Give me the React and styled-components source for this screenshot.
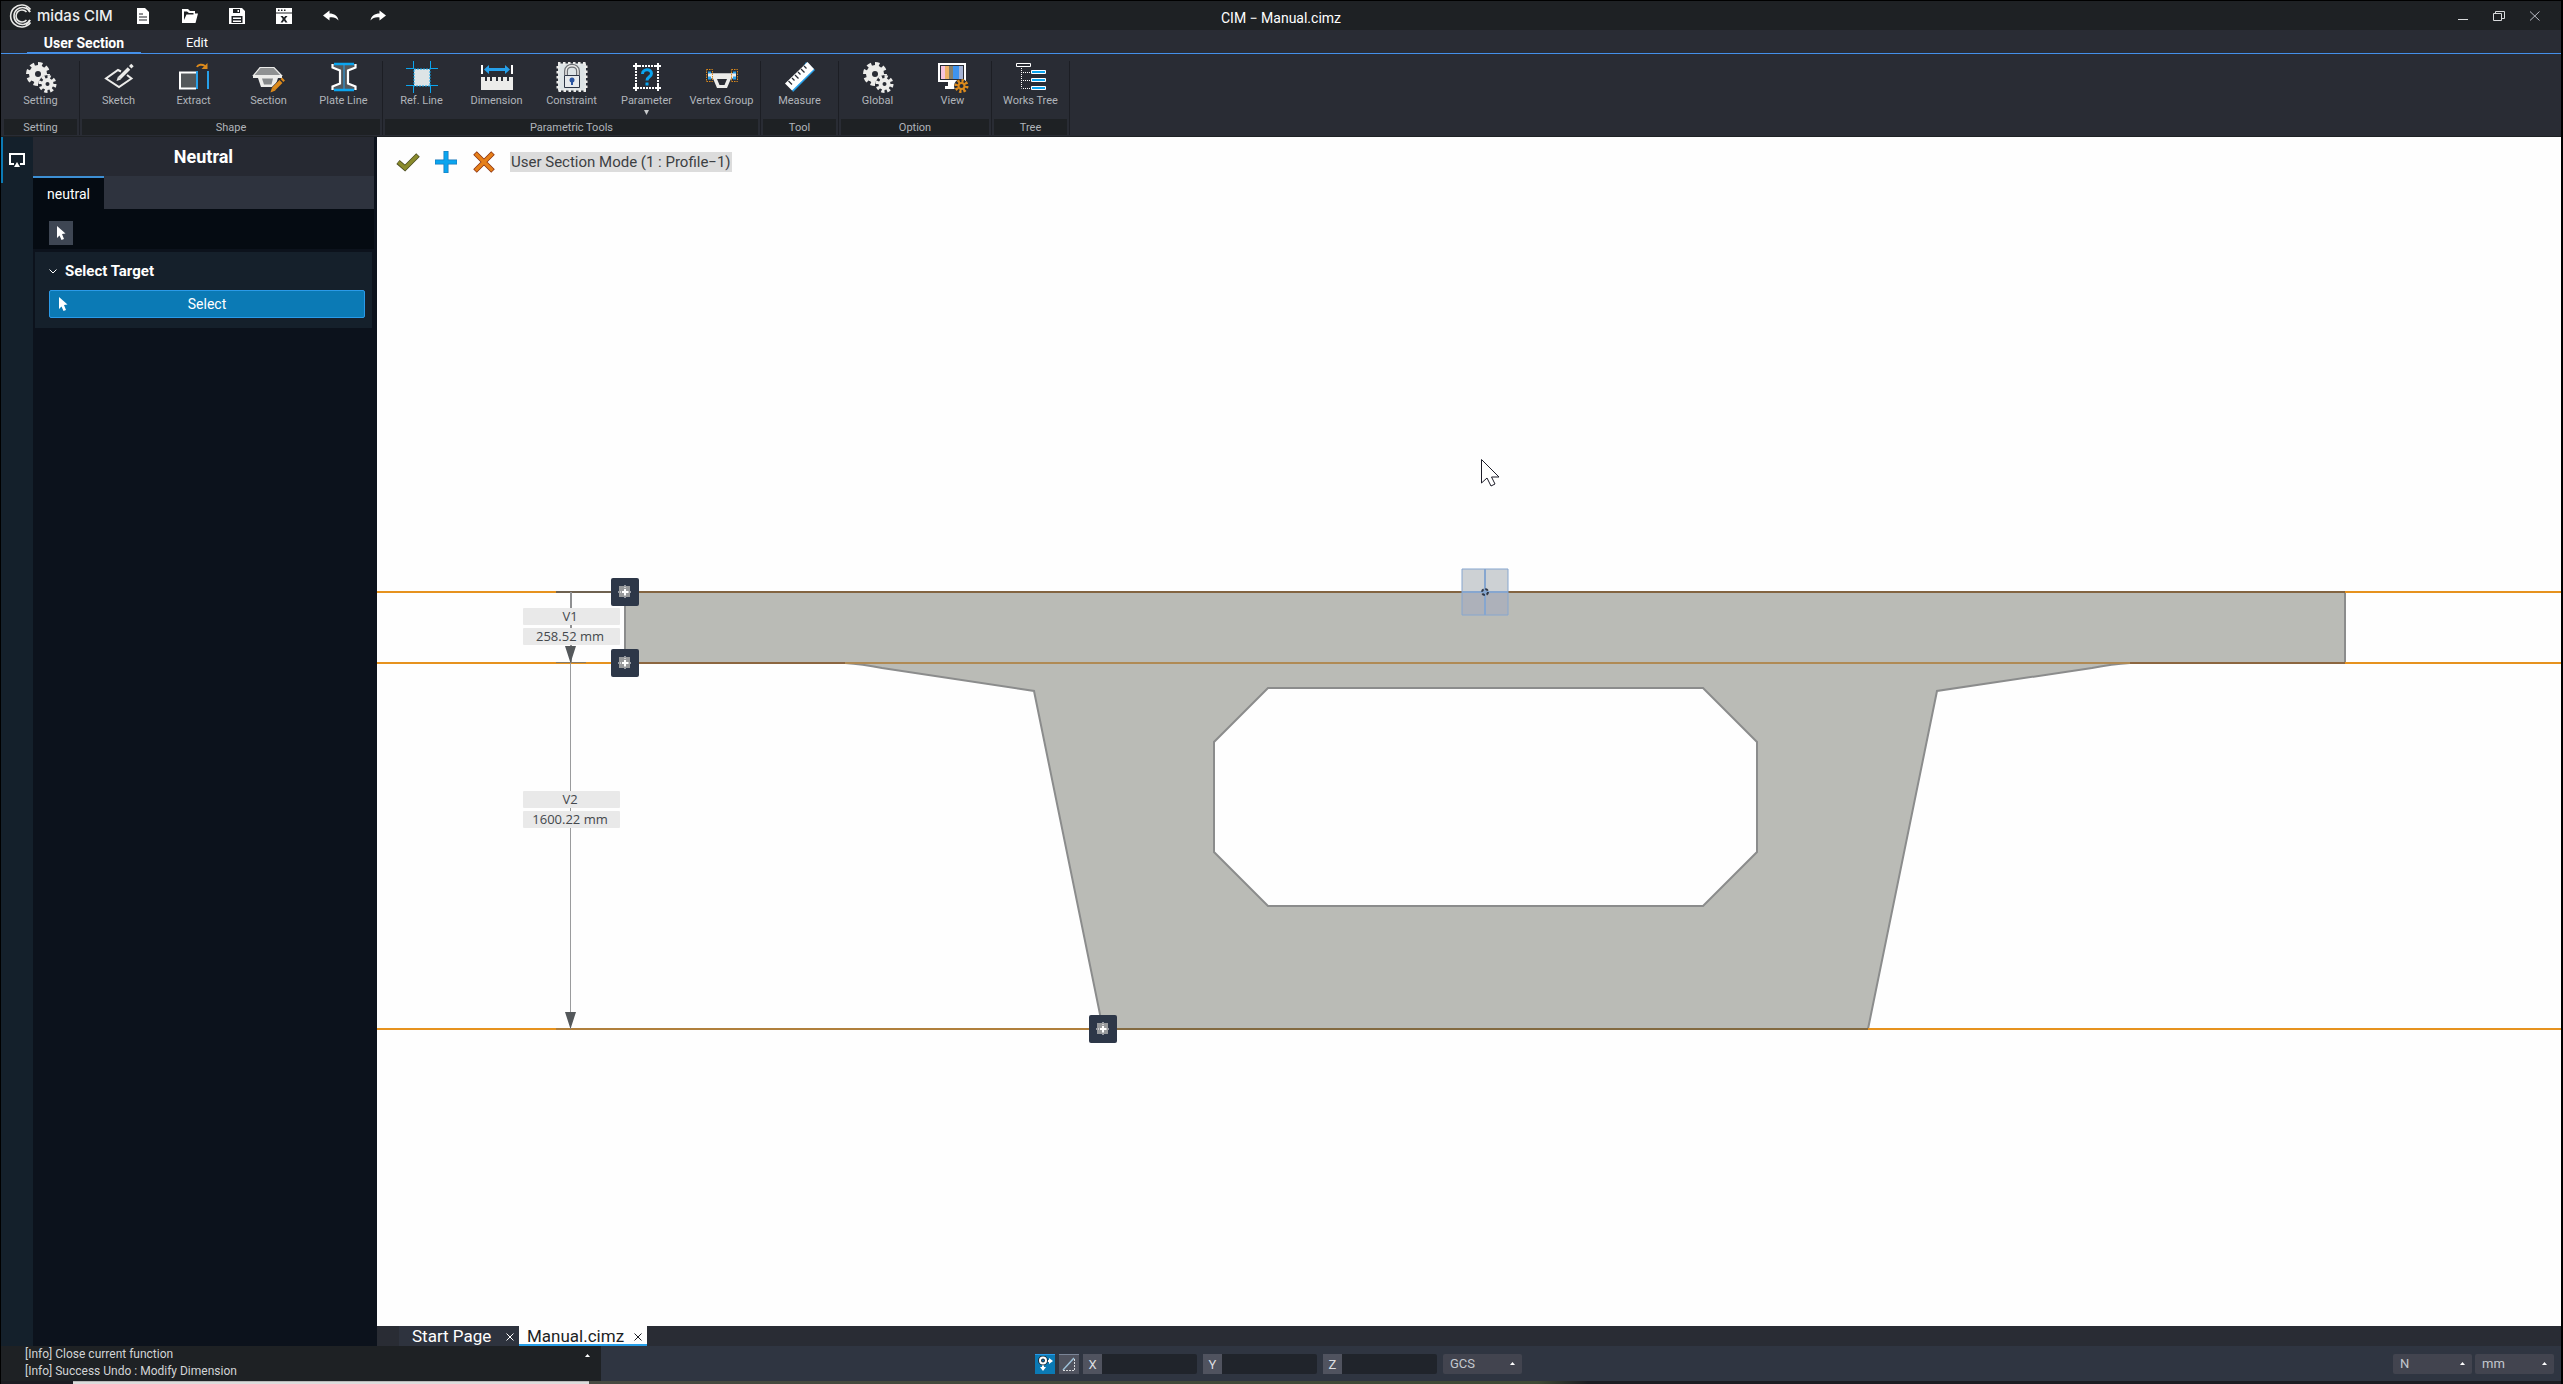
import React from 'react';
import styled, { createGlobalStyle } from 'styled-components';

const GlobalStyle = createGlobalStyle`
    * {
        box-sizing: border-box;
    }
    html, body, #root {
        height: 100%;
    }
    body {
        margin: 0;
        overflow: hidden;
        background: #000;
        color: #fff;
        font-family: Roboto, 'Noto Sans CJK KR', sans-serif;
    }
    button, input, select {
        font: inherit;
        color: inherit;
        border: none;
        margin: 0;
        padding: 0;
        outline: none;
    }
    svg {
        display: block;
        flex: none;
    }
`

/* ---------- icons ---------- */

const Gear = ({ cx, cy, r, color, hole }) => (
    <g>
        <circle cx={cx} cy={cy} r={r - 3} fill={color} />
        <circle cx={cx} cy={cy} r={r - 2} fill="none" stroke={color} strokeWidth="4" pathLength="16" strokeDasharray="1.1 0.9" />
        <circle cx={cx} cy={cy} r={hole} fill="#292c34" />
    </g>
)

const GearsIcon = () => (
    <svg width="32" height="32" viewBox="0 0 32 32">
        <Gear cx={13} cy={13} r={12} hole={3} color="#ececea" />
        <circle cx="22.500" cy="23" r="9" fill="#292c34" />
        <Gear cx={22.5} cy={23} r={9} hole={2} color="#ececea" />
    </svg>
)

const SketchIcon = () => (
    <svg width="32" height="32" viewBox="0 0 32 32" fill="none" stroke="#ececea">
        <path d="M18 10.500L15 9L3 17.500L16 26L28.500 17.500L24 14" strokeWidth="2" />
        <path d="M16.500 17L26 7.500" strokeWidth="3.500" />
        <path d="M27.200 6.200L29.500 4" strokeWidth="3.500" />
        <path d="M13.500 20L15 15.500L18 18.500Z" fill="#ececea" stroke="none" />
    </svg>
)

const ExtractIcon = () => (
    <svg width="32" height="32" viewBox="0 0 32 32" fill="none">
        <path d="M18 11.500H2V27.500H18" fill="#54585b" stroke="#fff" strokeWidth="2" />
        <path d="M19 10V28M30 10V28" stroke="#26a0ea" strokeWidth="2" />
        <path d="M19 6C20 3.500 24 3 27 5" stroke="#dc8a1c" strokeWidth="2" />
        <path d="M29.500 2V8H23.500Z" fill="#dc8a1c" />
    </svg>
)

const SectionIcon = () => (
    <svg width="34" height="32" viewBox="0 0 34 32">
        <path d="M8 6.500H22L29.500 14.500H1.500Z" fill="#8f9192" stroke="#ececea" strokeWidth="1.200" />
        <path d="M1 14.500H30V17H26L23 26H9L6 17H1Z" fill="#ececea" />
        <path d="M10 17.500H21L19.500 23.500H12Z" fill="#85888a" />
        <path d="M22 28L31 19" stroke="#292c34" strokeWidth="6" />
        <path d="M21.500 28L29 20.500" stroke="#dc8a1c" strokeWidth="4" />
        <path d="M30 19.500L31.500 18" stroke="#dc8a1c" strokeWidth="4" />
        <path d="M18.500 31.500L20 26.500L23.500 29.500Z" fill="#dc8a1c" />
    </svg>
)

const PlateIcon = () => (
    <svg width="32" height="32" viewBox="0 0 32 32">
        <path d="M5 3H27V6L19 9V23L27 26V29H5V26L13 23V9L5 6Z" fill="#54585b" />
        <path d="M4.500 3V6.500L12 9.500V22.500L4.500 25.500V29M27.500 3V6.500L20 9.500V22.500L27.500 25.500V29" fill="none" stroke="#fff" strokeWidth="2.200" />
        <path d="M6 3H26M6 29H26" stroke="#0aa5ef" strokeWidth="2.400" />
        <path d="M16 3V29" stroke="#26a0ea" />
    </svg>
)

const RefLineIcon = () => (
    <svg width="32" height="32" viewBox="0 0 32 32">
        <path d="M8 8H24V25H8Z" fill="#dde4e6" stroke="#0aa5ef" strokeDasharray="2 1" />
        <path d="M0 7.500H8M24 7.500H32M0 24.500H8M24 24.500H32M7.500 0V8M7.500 24V32M24.500 0V8M24.500 24V32" stroke="#0aa5ef" />
    </svg>
)

const DimensionIcon = () => (
    <svg width="32" height="32" viewBox="0 0 32 32">
        <path d="M1 4V13M31 4V13" stroke="#fff" strokeWidth="2" />
        <path d="M3 8.500L8 4V7H24V4L29 8.500L24 13V10H8V13Z" fill="#26a0ea" />
        <path d="M0 16H4V20H6V16H9V20H11V16H15V20H17V16H20V20H22V16H26V20H28V16H32V29H0Z" fill="#ececea" />
    </svg>
)

const ConstraintIcon = () => (
    <svg width="32" height="32" viewBox="0 0 32 32" fill="none">
        <path d="M2 2.500H30V29.500H2Z" fill="#dde4e6" stroke="#ececea" strokeWidth="3" strokeDasharray="2.500 2.500" />
        <path d="M10 14V10C10 3 22 3 22 10V14" stroke="#6d7175" strokeWidth="4" />
        <path d="M10 14V10C10 3 22 3 22 10V14" stroke="#ececea" strokeWidth="1.500" />
        <path d="M8.500 14.500H23.500V26.500H8.500Z" fill="#e6eaec" stroke="#2d3646" />
        <circle cx="16" cy="19" r="2.500" fill="#2a55a0" />
        <path d="M16 19V24" stroke="#2a55a0" strokeWidth="2" />
    </svg>
)

const ParameterIcon = () => (
    <svg width="32" height="32" viewBox="0 0 32 32" fill="none">
        <path d="M5 5H27V27H5Z" stroke="#fff" strokeWidth="2" strokeDasharray="2 1" />
        <path d="M2 5H8M5 2V8M24 5H30M27 2V8M2 27H8M5 24V30M24 27H30M27 24V30" stroke="#fff" strokeWidth="2" />
        <path d="M11.500 13C11.500 7.500 20.500 7.500 20.500 12.500C20.500 16 16 15.500 16 19.500" stroke="#0aa5ef" strokeWidth="3" />
        <path d="M14.500 21.500H17.500V24.500H14.500Z" fill="#0aa5ef" />
    </svg>
)

const VertexIcon = () => (
    <svg width="34" height="32" viewBox="0 0 34 32" fill="none">
        <path d="M4 12.500H30V17.500H26L22 27H12L8 17.500H4Z" fill="#ececea" />
        <path d="M12 18H22L19.500 24H14.500Z" fill="#292c34" />
        <path d="M3 10.500H6V18.500H3ZM28 10.500H31V18.500H28Z" fill="#26a0ea" />
        <path d="M3 14H31" stroke="#ececea" strokeWidth="3" />
        <path d="M1.500 8.500H7.500V20.500H1.500ZM26.500 8.500H32.500V20.500H26.500Z" stroke="#dc8a1c" strokeDasharray="1.500 1" />
    </svg>
)

const MeasureIcon = () => (
    <svg width="32" height="32" viewBox="0 0 32 32">
        <path d="M22 1L31 9L9 31L7 27Z" fill="#26a0ea" />
        <path d="M23.500 1L30 8L8 29.500L1 22.500Z" fill="#fff" />
        <path d="M4.500 20L8 23.500M8 17L10.500 19.500M11 14L14.500 17.500M14 11L16.500 13.500M17 8L20.500 11.500M20 5L22.500 7.500" stroke="#292c34" strokeWidth="1.300" />
    </svg>
)

const ViewIcon = () => (
    <svg width="32" height="32" viewBox="0 0 32 32">
        <path d="M1 2H29V21H19V25H22V28H8V25H11V21H1Z" fill="#fff" />
        <path d="M3 4H27V19H3Z" fill="#292c34" />
        <path d="M4 5H8V18H4Z" fill="#f7c3dc" />
        <path d="M8 5H12V18H8Z" fill="#efb267" />
        <path d="M12 5H16V18H12Z" fill="#85806d" />
        <path d="M16 5H22V18H16Z" fill="#3f94ee" />
        <path d="M22 5H26V18H22Z" fill="#a4b2d4" />
        <circle cx="24" cy="25" r="7" fill="#292c34" />
        <Gear cx={24.5} cy={25} r={7} hole={2} color="#dc8a1c" />
    </svg>
)

const TreeIcon = () => (
    <svg width="32" height="32" viewBox="0 0 32 32" fill="none">
        <path d="M1.500 2.500H15.500V5.500H1.500Z" stroke="#fff" />
        <path d="M6.500 7V27.500M8 11.500H16M8 19.500H16M8 27.500H16" stroke="#fff" strokeDasharray="1 1" />
        <path d="M16.500 9.500H30.500V12.500H16.500ZM16.500 17.500H30.500V20.500H16.500ZM16.500 25.500H30.500V28.500H16.500Z" fill="#0aa5ef" stroke="#fff" />
    </svg>
)

const PointerIcon = () => (
    <svg width="10" height="15" viewBox="0 0 10 15">
        <path d="M1 0L9.500 7.500L6 8L8 13L5.500 14L3.500 9.500L1 12Z" fill="#fff" />
    </svg>
)

const LogoIcon = () => (
    <svg width="24" height="24" viewBox="0 0 24 24" fill="none" stroke="#e8e8e6" strokeWidth="1.600">
        <path d="M21.500 5.500A11 11 0 1 0 21.500 18.500" />
        <path d="M21 8A8.500 8.500 0 1 0 21 16" />
        <path d="M17.500 8A6 6 0 1 0 17.500 16" />
        <path d="M17 3.500A8.500 8.500 0 0 1 21 8M17 20.500A8.500 8.500 0 0 0 21 16" />
    </svg>
)

const fileIcons = [
    ['New', <path d="M2 0H10L14 4V16H2ZM4 5.500V6.500H8V5.500ZM4 8.500V9.500H12V8.500ZM4 11.500V12.500H12V11.500Z" fillRule="evenodd" />],
    ['Open', <path d="M0 1H6L8 3H13V5.500H16L13.500 15H0ZM2 3.500V12L4.500 6.500H11.500V5H7L5 3.500Z" fillRule="evenodd" />],
    ['Save', <path d="M0 0H13L16 3V16H0ZM4 1V5H11V1ZM8.500 2H10V4H8.500ZM2.500 8V15H13.500V8ZM4 9.500H12V11H4ZM4 12.500H12V14H4Z" fillRule="evenodd" />],
    ['Export', <path d="M0 0H16V16H0ZM2 1.500V3H3.500V1.500ZM5 1.500V3H6.500V1.500ZM8 1.500V3H9.500V1.500ZM0 4.500V5.500H16V4.500ZM4.500 8L6.800 11L4.500 14.500H6.700L8 12.500L9.300 14.500H11.500L9.200 11L11.500 8H9.300L8 9.500L6.700 8Z" fillRule="evenodd" />],
    ['Undo', <path d="M0 7.500L6.500 2.500V5.500C11 5.500 15 8 15.500 12.500C13 9.500 10 9 6.500 9.500V12.500Z" />],
    ['Redo', <path d="M16 7.500L9.500 2.500V5.500C5 5.500 1 8 0.500 12.500C3 9.500 6 9 9.500 9.500V12.500Z" />],
]

/* ---------- data ---------- */

const ribbon = [
    { caption: 'Setting', items: [['Setting', GearsIcon]] },
    { caption: 'Shape', items: [['Sketch', SketchIcon], ['Extract', ExtractIcon], ['Section', SectionIcon], ['Plate Line', PlateIcon]] },
    { caption: 'Parametric Tools', items: [['Ref. Line', RefLineIcon], ['Dimension', DimensionIcon], ['Constraint', ConstraintIcon], ['Parameter', ParameterIcon, true], ['Vertex Group', VertexIcon]] },
    { caption: 'Tool', items: [['Measure', MeasureIcon]] },
    { caption: 'Option', items: [['Global', GearsIcon], ['View', ViewIcon]] },
    { caption: 'Tree', items: [['Works Tree', TreeIcon]] },
]

const Handle = ({ x, y }) => (
    <g transform={`translate(${x} ${y})`}>
        <rect x="-14" y="-14" width="28" height="28" rx="2" fill="#2d3748" />
        <rect x="-6" y="-6" width="11" height="11" fill="#97999b" />
        <path d="M-7 0H7M0 -7V7" stroke="#fff" strokeDasharray="1 1" />
        <path d="M-3 0H3M0 -3V3" stroke="#fff" strokeWidth="2" />
    </g>
)

const DimensionTag = ({ y, name, value }) => (
    <g>
        <rect x="146" y={y} width="97" height="17" rx="1" fill="#e9e9e9" />
        <rect x="146" y={y + 20} width="97" height="17" rx="1" fill="#e9e9e9" />
        <TagText x="193" y={y + 13}>{name}</TagText>
        <TagText x="193" y={y + 33}>{value}</TagText>
    </g>
)

const Drawing = () => (
    <Canvas viewBox="0 0 2184 1189" preserveAspectRatio="xMidYMid meet">
        <path
            d="M248 455H1968V526H1753C1735 527 1725 529 1715 531L1560 554L1491 892H726L657 554L505 531C495 529 485 527 468 526H248Z
               M891 551L837 605V715L891 769H1326L1380 715V605L1326 551Z"
            fill="#babbb6" stroke="#8b8c8c" strokeWidth="2" fillRule="evenodd"
        />
        <path d="M0 455H2184M0 526H2184M0 892H2184" stroke="#e6921e" strokeWidth="2" />
        <path d="M179 455H248" stroke="#6f6250" strokeWidth="2" />
        <path d="M248 455H1968" stroke="#836441" strokeWidth="2" />
        <path d="M248 526H468M1753 526H1968" stroke="#8c6640" strokeWidth="2" />
        <path d="M468 526H1753" stroke="#b08a54" strokeWidth="2" />
        <path d="M179 892H726" stroke="#b07f3c" strokeWidth="2" />
        <path d="M726 892H1491" stroke="#836a41" strokeWidth="2" />
        <path d="M194 455V526" stroke="#8f9092" strokeWidth="2" />
        <path d="M193.500 526V892" stroke="#9a9b9d" />
        <path d="M188 509H199L193.500 526ZM188 875H199L193.500 892Z" fill="#54585b" />
        <path d="M179 525.500H209" stroke="#8a7a60" />
        <DimensionTag y={471} name="V1" value="258.52 mm" />
        <DimensionTag y={654} name="V2" value="1600.22 mm" />
        <Handle x={248} y={455} />
        <Handle x={248} y={526} />
        <Handle x={726} y={892} />
        <g stroke="#86a6cf">
            <path d="M1085 432H1131V455H1085Z" fill="#cdd1d4" />
            <path d="M1085 455H1131V478H1085Z" fill="#adb1ba" />
            <path d="M1108 432V478M1085 455H1131" strokeWidth="2" />
            <circle cx="1108" cy="455" r="3" fill="none" stroke="#2d3748" strokeWidth="2" strokeDasharray="3 1.700" />
        </g>
        <path d="M1104.500 322.500V346L1110 341L1114 349L1118 347L1114.500 340H1122Z" fill="#fff" stroke="#1c1c28" />
    </Canvas>
)

const Dropdown = ({ label, value }) => (
    <Picker>
        <select aria-label={label} defaultValue={value}>
            <option>{value}</option>
        </select>
        <svg width="5" height="3" viewBox="0 0 5 3"><path d="M2.500 0L5 3H0Z" fill="#fff" /></svg>
    </Picker>
)

const App = () => {
    return (
        <Window>
            <GlobalStyle />
            <TitleBar>
                <Brand><LogoIcon />midas CIM</Brand>
                <FileActions>
                    {fileIcons.map(([name, shape]) => (
                        <IconButton key={name} aria-label={name}>
                            <svg width="16" height="16" viewBox="0 0 16 16" fill="#fff">{shape}</svg>
                        </IconButton>
                    ))}
                </FileActions>
                <DocTitle>CIM − Manual.cimz</DocTitle>
                <WindowActions>
                    <IconButton aria-label="Minimize">
                        <svg width="12" height="12" viewBox="0 0 12 12"><path d="M1 9.500H11" stroke="#d8dadc" /></svg>
                    </IconButton>
                    <IconButton aria-label="Restore">
                        <svg width="12" height="12" viewBox="0 0 12 12" fill="none" stroke="#d8dadc"><path d="M0.500 3.500H8.500V10.500H0.500ZM2.500 3V1.500H11.500V8.500H9" /></svg>
                    </IconButton>
                    <IconButton aria-label="Close">
                        <svg width="12" height="12" viewBox="0 0 12 12" stroke="#b8bac4"><path d="M1 1.500L10.500 10.500M10.500 1.500L1 10.500" /></svg>
                    </IconButton>
                </WindowActions>
            </TitleBar>

            <MenuTabs>
                <MenuTab $active>User Section</MenuTab>
                <MenuTab>Edit</MenuTab>
            </MenuTabs>

            <Ribbon>
                {ribbon.map(group => (
                    <Group key={group.caption}>
                        <Tools>
                            {group.items.map(([name, Icon, more]) => (
                                <Tool key={name}>
                                    <Icon />
                                    <span>{name}</span>
                                    {more && <svg width="5" height="5" viewBox="0 0 5 5"><path d="M0 0H5L2.500 5Z" fill="#c8cacc" /></svg>}
                                </Tool>
                            ))}
                        </Tools>
                        <Caption>{group.caption}</Caption>
                    </Group>
                ))}
            </Ribbon>

            <Body>
                <Rail>
                    <RailButton aria-label="Panel">
                        <svg width="16" height="14" viewBox="0 0 16 14">
                            <path d="M5 11H1V1H15V11H11" fill="none" stroke="#fff" strokeWidth="2" />
                            <path d="M8 9L11 14H5Z" fill="#fff" />
                        </svg>
                    </RailButton>
                </Rail>
                <Panel>
                    <PanelTitle>Neutral</PanelTitle>
                    <PanelTabs><PanelTab>neutral</PanelTab></PanelTabs>
                    <PanelTools>
                        <ModeButton aria-label="Pick"><PointerIcon /></ModeButton>
                    </PanelTools>
                    <Target>
                        <TargetTitle>
                            <svg width="8" height="5" viewBox="0 0 8 5"><path d="M0.500 0.500L4 4L7.500 0.500" fill="none" stroke="#fff" /></svg>
                            Select Target
                        </TargetTitle>
                        <SelectButton><PointerIcon /><span>Select</span></SelectButton>
                    </Target>
                </Panel>
                <Workspace>
                    <Viewport>
                        <Drawing />
                        <ModeBar>
                            <IconButton aria-label="Apply">
                                <svg width="24" height="24" viewBox="0 0 24 24"><path d="M2 12L9 18L22 5" fill="none" stroke="#4a4c20" strokeWidth="5" /><path d="M2.500 12.300L9 18L21.500 5.500" fill="none" stroke="#8a8b2c" strokeWidth="3.500" /></svg>
                            </IconButton>
                            <IconButton aria-label="Add">
                                <svg width="24" height="24" viewBox="0 0 24 24"><path d="M12 1V23M1 12H23" stroke="#1877b8" strokeWidth="5" /><path d="M12 1.500V22.500M1.500 12H22.500" stroke="#0aa5ef" strokeWidth="3.500" /></svg>
                            </IconButton>
                            <IconButton aria-label="Cancel">
                                <svg width="24" height="24" viewBox="0 0 24 24"><path d="M3 3L21 21M21 3L3 21" stroke="#8a3010" strokeWidth="5" /><path d="M3.500 3.500L20.500 20.500M20.500 3.500L3.500 20.500" stroke="#e6801a" strokeWidth="3.500" /></svg>
                            </IconButton>
                            <ModeText>User Section Mode (1 : Profile−1)</ModeText>
                        </ModeBar>
                    </Viewport>
                    <DocTabs>
                        <DocTab>Start Page<CloseMark /></DocTab>
                        <DocTab $active>Manual.cimz<CloseMark /></DocTab>
                    </DocTabs>
                </Workspace>
            </Body>

            <StatusBar>
                <Messages>
                    <div>
                        <p>[Info] Close current function</p>
                        <p>[Info] Success Undo : Modify Dimension</p>
                    </div>
                    <svg width="5" height="3" viewBox="0 0 5 3"><path d="M2.500 0L5 3H0Z" fill="#fff" /></svg>
                </Messages>
                <Coordinates>
                    <SnapButton $active aria-label="Snap">
                        <svg width="16" height="16" viewBox="0 0 16 16" fill="none" stroke="#fff" strokeWidth="2">
                            <path d="M6 7V11M9 5H12" />
                            <circle cx="6" cy="4.500" r="3" stroke="#1c2a38" strokeWidth="4" />
                            <circle cx="6" cy="4.500" r="3" />
                            <path d="M3 11H9L6 15ZM12 2V8L16 5Z" fill="#fff" stroke="none" />
                        </svg>
                    </SnapButton>
                    <SnapButton aria-label="Ortho">
                        <svg width="16" height="16" viewBox="0 0 16 16" fill="none">
                            <path d="M2 14L13 2" stroke="#9cc0d8" strokeWidth="1.500" />
                            <path d="M13.500 3V14.500H2" stroke="#d8dadc" strokeDasharray="2 1" />
                        </svg>
                    </SnapButton>
                    {['X', 'Y', 'Z'].map(axis => (
                        <Coordinate key={axis}><span>{axis}</span><input /></Coordinate>
                    ))}
                    <Dropdown label="Coordinate system" value="GCS" />
                </Coordinates>
                <Units>
                    <Dropdown label="Force" value="N" />
                    <Dropdown label="Length" value="mm" />
                </Units>
            </StatusBar>
            <Taskbar><i /></Taskbar>
        </Window>
    )
}

export default App

const CloseMark = () => (
    <IconButton aria-label="Close tab">
        <svg width="8" height="8" viewBox="0 0 8 8" stroke="currentColor"><path d="M0.500 0.500L7.500 7.500M7.500 0.500L0.500 7.500" /></svg>
    </IconButton>
)

const Window = styled.div`
    display: flex;
    flex-direction: column;
    height: 100vh;
    padding: 1px 2px 0 1px;
`
const TitleBar = styled.header`
    display: grid;
    grid-template-columns: 1fr auto 1fr;
    grid-template-areas: 'left title right';
    height: 29px;
    align-items: center;
    background: #1e2124;
`
const Brand = styled.div`
    grid-area: left;
    display: flex;
    align-items: center;
    gap: 4px;
    padding-left: 8px;
    font-family: Inter, sans-serif;
    font-size: 15px;
    font-weight: 500;
    color: #eceef0;
`
const FileActions = styled.nav`
    grid-area: left;
    display: flex;
    gap: 31px;
    padding-left: 134px;
`
const IconButton = styled.button`
    background: none;
`
const DocTitle = styled.div`
    grid-area: title;
    padding-top: 4px;
    font-size: 14px;
`
const WindowActions = styled.div`
    grid-area: right;
    display: flex;
    justify-content: flex-end;
    gap: 24px;
    padding-right: 20px;
`
const MenuTabs = styled.nav`
    display: flex;
    height: 24px;
    padding-left: 26px;
    background: #292c34;
    border-bottom: 1px solid #4490ea;
`
const MenuTab = styled.button`
    width: ${props => props.$active ? '114px' : '112px'};
    padding-top: 4px;
    background: none;
    border-bottom: 1px solid ${props => props.$active ? '#4490ea' : 'transparent'};
    font-size: ${props => props.$active ? '14px' : '13px'};
    line-height: 18px;
    font-weight: ${props => props.$active ? 700 : 400};
`
const Ribbon = styled.div`
    display: flex;
    height: 83px;
    padding: 7px 0 1px 2px;
    background: #292c34;
    border-bottom: 1px solid #1e2124;
`
const Group = styled.section`
    display: flex;
    flex-direction: column;
    justify-content: space-between;
    padding-right: 1px;
    margin-right: 1px;
    border-right: 1px solid #1c1e24;
`
const Tools = styled.div`
    display: flex;
`
const Tool = styled.button`
    display: flex;
    flex-direction: column;
    align-items: center;
    width: 75px;
    background: none;
    color: #b0b4ba;
    font-size: 11px;
    span {
        line-height: 15px;
        margin-bottom: 2px;
        white-space: nowrap;
    }
`
const Caption = styled.div`
    margin: 0 1px;
    padding-top: 1px;
    background: #1e2124;
    color: #b0b4ba;
    font-size: 11px;
    line-height: 15px;
    text-align: center;
`
const Body = styled.main`
    display: flex;
    flex: 1;
    min-height: 0;
`
const Rail = styled.aside`
    width: 32px;
    background: #14202b;
`
const RailButton = styled.button`
    display: flex;
    width: 100%;
    height: 46px;
    padding: 16px 6px;
    background: none;
    border-left: 2px solid #0b7ab5;
`
const Panel = styled.aside`
    width: 344px;
    padding-right: 3px;
    background: #0c121c;
`
const PanelTitle = styled.h2`
    margin: 0;
    background: #262932;
    font-size: 18px;
    font-weight: 700;
    line-height: 39px;
    text-align: center;
`
const PanelTabs = styled.div`
    display: flex;
    height: 33px;
    background: #2e333e;
`
const PanelTab = styled.button`
    width: 71px;
    background: #050b12;
    border-top: 2px solid #3d8fd4;
    font-size: 14px;
`
const PanelTools = styled.div`
    padding: 12px 16px 4px;
    background: #050b12;
`
const ModeButton = styled.button`
    display: flex;
    align-items: center;
    justify-content: center;
    width: 24px;
    height: 24px;
    background: #3e4653;
`
const Target = styled.section`
    margin: 3px 2px 0;
    padding: 8px 7px 10px 14px;
    background: #15202b;
`
const TargetTitle = styled.h3`
    display: flex;
    align-items: center;
    gap: 8px;
    margin: 0 0 8px;
    font-size: 15px;
    font-weight: 700;
    line-height: 22px;
`
const SelectButton = styled.button`
    display: flex;
    align-items: center;
    width: 100%;
    height: 28px;
    padding: 0 18px 0 8px;
    background: #0b7ab5;
    border: 1px solid #2a9ae8;
    border-radius: 2px;
    font-size: 14px;
    span {
        flex: 1;
    }
`
const Workspace = styled.section`
    display: flex;
    flex-direction: column;
    flex: 1;
    min-width: 0;
`
const Viewport = styled.div`
    position: relative;
    flex: 1;
    min-height: 0;
    background: #fefefe;
`
const Canvas = styled.svg`
    width: 100%;
    height: 100%;
`
const TagText = styled.text`
    font-family: 'Open Sans', sans-serif;
    font-size: 13px;
    text-anchor: middle;
    fill: #44484c;
`
const ModeBar = styled.div`
    position: absolute;
    top: 13px;
    left: 19px;
    display: flex;
    align-items: center;
    gap: 14px;
`
const ModeText = styled.span`
    padding: 0 1px;
    background: #dcdcdc;
    color: #3c4043;
    font-size: 15px;
    line-height: 20px;
`
const DocTabs = styled.div`
    display: flex;
    height: 20px;
    padding-left: 22px;
    background: #292c34;
`
const DocTab = styled.div`
    display: flex;
    align-items: center;
    justify-content: space-between;
    width: ${props => props.$active ? '128px' : '120px'};
    padding: 3px 5px 0 ${props => props.$active ? '8px' : '13px'};
    background: ${props => props.$active ? '#fefefe' : '#2e333e'};
    color: ${props => props.$active ? '#1c1e24' : '#fff'};
    border-bottom: 2px solid ${props => props.$active ? '#26a0ea' : '#2e333e'};
    font-size: 17px;
    line-height: 15px;
    white-space: nowrap;
`
const StatusBar = styled.footer`
    display: grid;
    grid-template-columns: 600px auto 1fr;
    align-items: center;
    height: 35px;
    background: #2f3541;
`
const Messages = styled.div`
    display: flex;
    justify-content: space-between;
    height: 35px;
    padding: 0 11px 0 24px;
    background: #1e2124;
    color: #d2d4d6;
    font-size: 12px;
    line-height: 17px;
    p {
        margin: 0;
    }
    svg {
        margin-top: 8px;
    }
`
const Coordinates = styled.div`
    display: flex;
    align-items: center;
    padding-left: 434px;
`
const SnapButton = styled.button`
    display: flex;
    align-items: center;
    justify-content: center;
    width: 20px;
    height: 20px;
    margin-right: 4px;
    background: ${props => props.$active ? '#0b7ab5' : '#50535f'};
    border-top: 1px solid ${props => props.$active ? '#2a9ae8' : '#7a8496'};
`
const Coordinate = styled.label`
    display: flex;
    height: 20px;
    margin-right: 6px;
    color: #dcdee0;
    font-size: 13px;
    line-height: 21px;
    text-align: center;
    span {
        width: 19px;
        background: #50535f;
    }
    input {
        width: 95px;
        background: #20242b;
        border-radius: 0 2px 2px 0;
    }
`
const Picker = styled.label`
    display: flex;
    align-items: center;
    width: 79px;
    height: 20px;
    padding-right: 7px;
    background: #42444f;
    border-radius: 2px;
    color: #c4c8ce;
    font-size: 13px;
    select {
        flex: 1;
        min-width: 0;
        padding-left: 7px;
        appearance: none;
        background: none;
    }
`
const Units = styled.div`
    display: flex;
    justify-content: flex-end;
    gap: 3px;
    padding-right: 7px;
`
const Taskbar = styled.div`
    height: 3px;
    padding-left: 72px;
    background: linear-gradient(to right, #1c1c22 588px, #474a42 588px, #3f4a36 60%, #1c1c22 62%);
    i {
        display: block;
        width: 516px;
        height: 3px;
        background: #dcdcdc;
        border-top: 1px solid #b8b8b8;
    }
`
